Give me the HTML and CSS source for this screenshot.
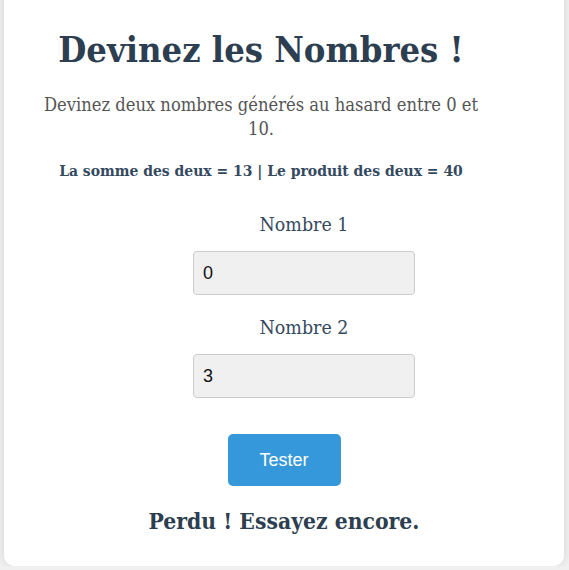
FILE: index.html
```html
<!DOCTYPE html>
<html lang="fr">
<head>
<meta charset="utf-8">
<title>Devinez les Nombres</title>
<link rel="stylesheet" href="styles.css">
</head>
<body>
<main class="card">
  <header class="head">
    <h1 class="title">Devinez les Nombres !</h1>
    <p class="intro">Devinez deux nombres générés au hasard entre 0 et 10.</p>
    <p class="hint">La somme des deux = 13 | Le produit des deux = 40</p>
  </header>
  <form class="form">
    <label class="field">
      <span class="field-label">Nombre 1</span>
      <input class="field-input" type="text" value="0">
    </label>
    <label class="field">
      <span class="field-label">Nombre 2</span>
      <input class="field-input" type="text" value="3">
    </label>
    <button class="btn" type="button">Tester</button>
  </form>
  <p class="result">Perdu ! Essayez encore.</p>
</main>
</body>
</html>
```
FILE: styles.css
```css
html, body {
  margin: 0;
  padding: 0;
}
body {
  background: #f0f0f0;
  font-family: "DejaVu Serif Condensed", "DejaVu Serif", serif;
  font-stretch: condensed;
  color: #2c3e50;
  padding: 0 5px 0 4px;
  overflow: hidden;
}
.card {
  margin-top: -13px;
  background: #fff;
  border-radius: 10px;
  box-shadow: 0 0 8px rgba(0, 0, 0, 0.12);
  padding: 38px 20px 30px;
  text-align: center;
}
.head {
  padding-right: 46px;
}
.title {
  margin: 0;
  font-size: 36px;
  line-height: 48px;
  font-weight: bold;
  color: #2c3e50;
}
.intro {
  margin: 20px auto 0;
  max-width: 450px;
  font-size: 18.2px;
  line-height: 24px;
  color: #555;
}
.hint {
  margin: 19px 0 0;
  font-size: 15.5px;
  line-height: 22px;
  font-weight: bold;
  color: #34495e;
}
.form {
  margin-top: 31px;
  display: flex;
  flex-direction: column;
  align-items: center;
}
.field {
  display: flex;
  flex-direction: column;
  align-items: center;
  margin: 0 0 21px 40px;
}
.field-label {
  font-size: 19.4px;
  line-height: 24px;
  color: #34495e;
  margin-bottom: 14px;
}
.field-input {
  box-sizing: border-box;
  width: 222px;
  height: 44px;
  padding: 0 9px;
  border: 1px solid #ccc;
  border-radius: 4px;
  background: #f0f0f0;
  font-family: "Liberation Sans", Arial, sans-serif;
  font-size: 18px;
  color: #111;
}
.btn {
  margin-top: 15px;
  width: 113px;
  height: 52px;
  border: none;
  border-radius: 5px;
  background: #3498db;
  color: #fff;
  font-family: "Liberation Sans", Arial, sans-serif;
  font-size: 18px;
}
.result {
  margin: 20px 0 0;
  font-size: 22.7px;
  line-height: 30px;
  font-weight: bold;
  color: #2c3e50;
}
```
